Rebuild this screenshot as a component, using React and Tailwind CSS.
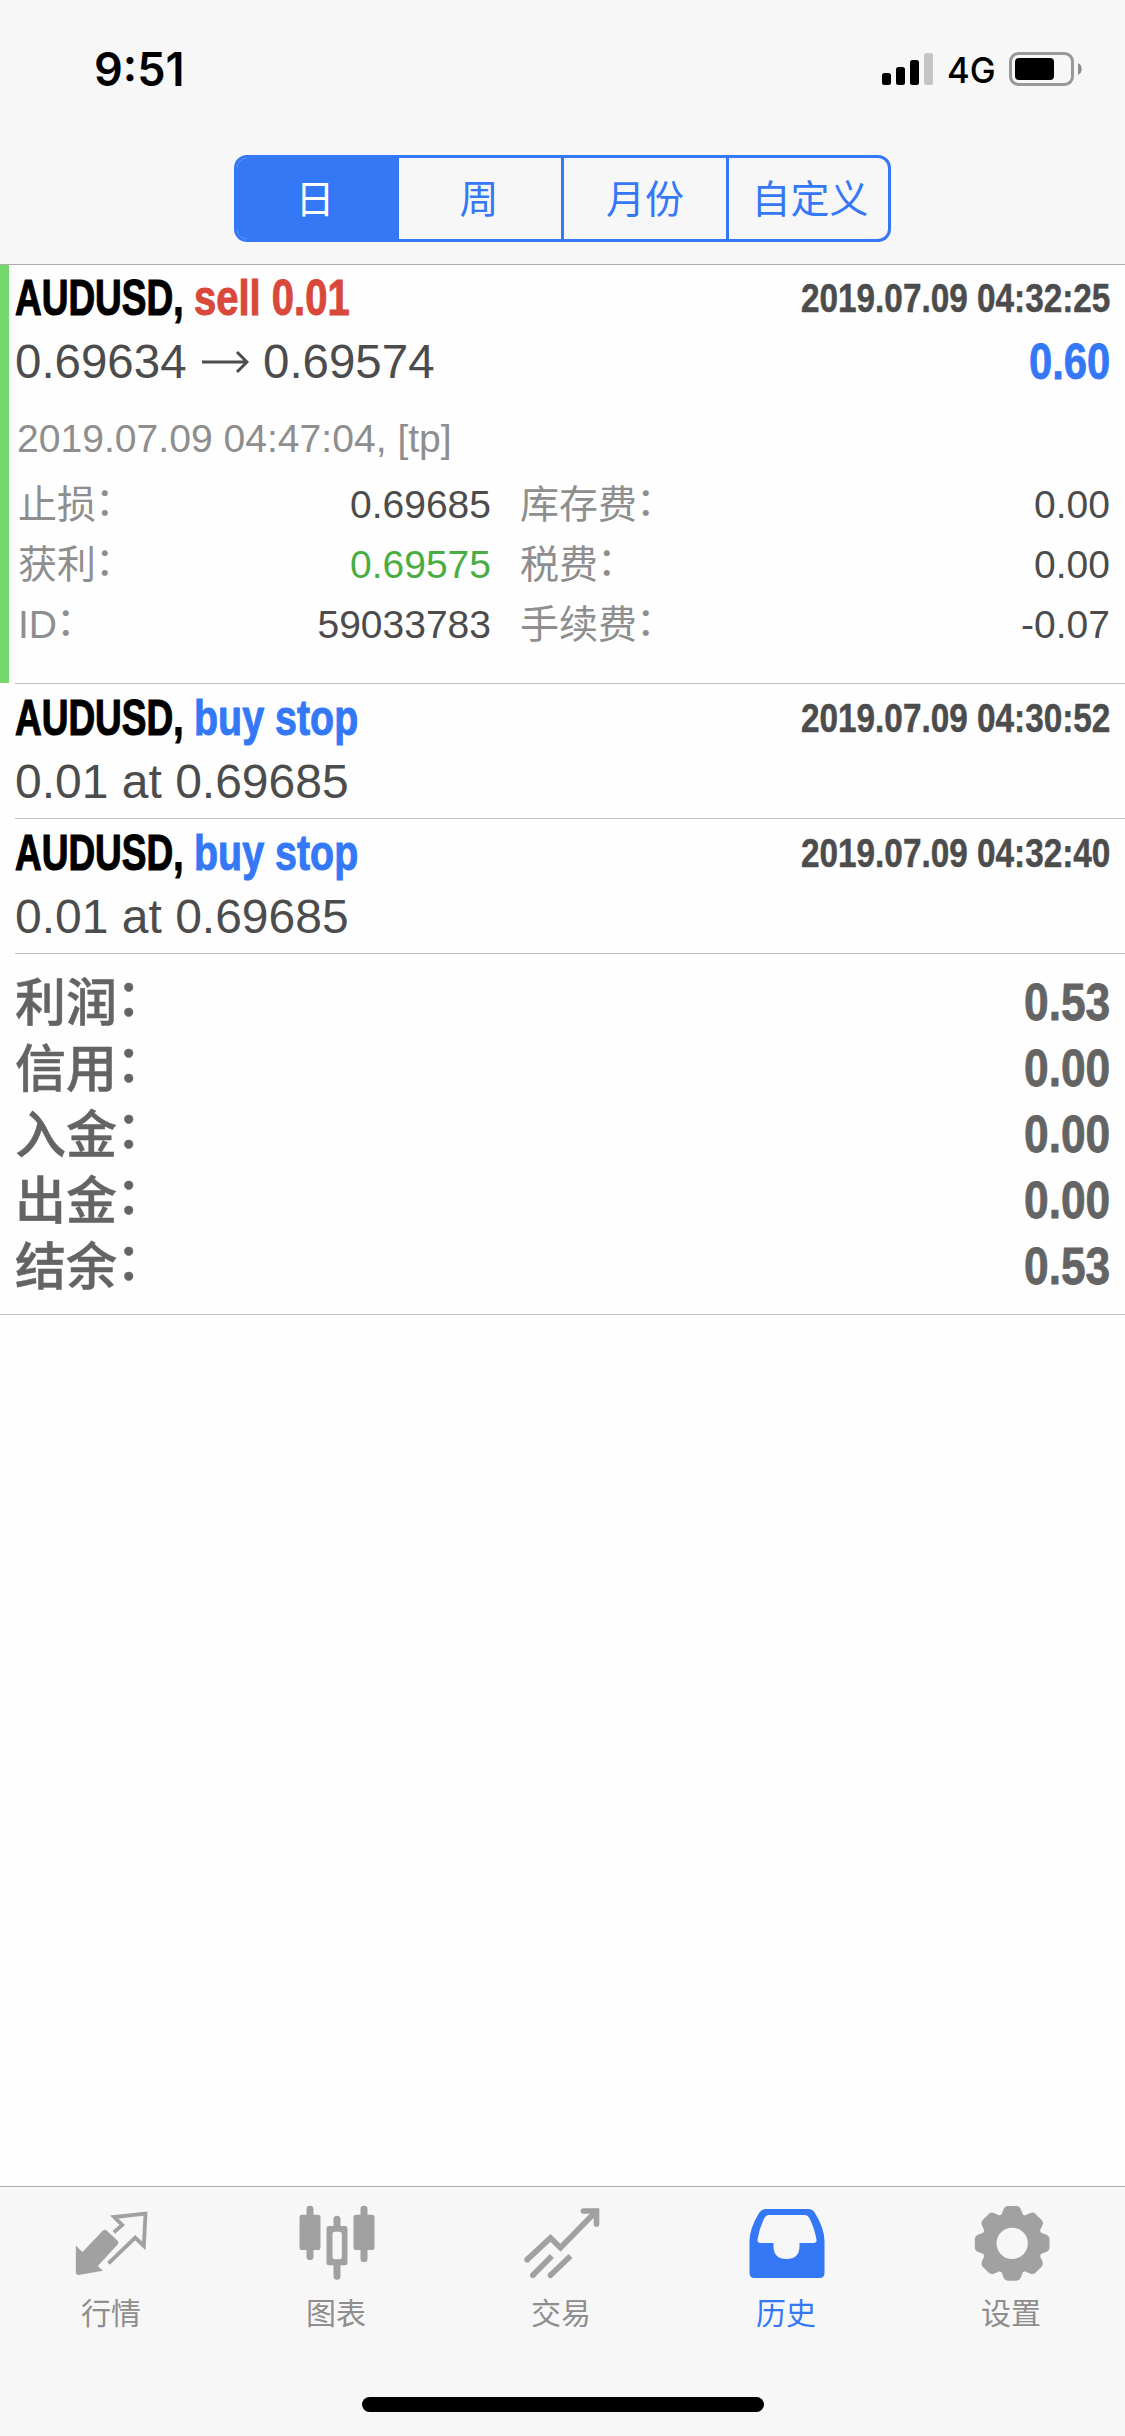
import { useLayoutEffect, useRef, useState } from "react";

// Squeezes a run of text horizontally so that it takes exactly `width` pixels.
function Condensed({ width, className = "", children }) {
  const ref = useRef(null);
  const [scale, setScale] = useState(1);
  useLayoutEffect(() => {
    setScale(width / ref.current.offsetWidth);
  }, [width, children]);
  return (
    <span className={`block ${className}`} style={{ width }}>
      <span
        ref={ref}
        className="inline-block origin-left whitespace-nowrap"
        style={{ transform: `scaleX(${scale})` }}
      >
        {children}
      </span>
    </span>
  );
}

const GRAY = "#a1a1a1";
const BLUE = "#3478f6";

function StatusBar() {
  return (
    <div className="flex h-[138px] items-center pl-[94px] pr-[43px] font-['Inter',sans-serif] text-black">
      <Condensed width={90} className="text-[46px] font-semibold leading-[54px]">9:51</Condensed>
      <svg className="ml-auto mr-[14px] h-8 w-[51px]" viewBox="0 0 51 32">
        <rect x="0" y="20" width="9" height="12" rx="2.5" />
        <rect x="14" y="14" width="9" height="18" rx="2.5" />
        <rect x="28" y="7" width="9" height="25" rx="2.5" />
        <rect x="42" y="0" width="9" height="32" rx="2.5" fill="#c5c5c5" />
      </svg>
      <Condensed width={49} className="relative top-px text-[36px] font-medium leading-[44px]">4G</Condensed>
      <svg className="ml-[13px] h-[34px] w-[73px]" viewBox="0 0 73 34">
        <rect x="1.5" y="1.5" width="62" height="31" rx="8" fill="none" stroke="#999" strokeWidth="3" />
        <rect x="6" y="6" width="39" height="22" rx="4" />
        <path d="M69 11c5 2.5 5 9.500 0 12z" fill="#8c8c8c" />
      </svg>
    </div>
  );
}

function Segments() {
  return (
    <div className="ml-[234px] mt-[17px] flex h-[87px] w-[657px] overflow-hidden rounded-[13px] border-[3px] border-[#3478f6] text-[39px] leading-[83px] text-[#3478f6]">
      <div className="w-[162px] bg-[#3478f6] pr-1.5 text-center text-white">日</div>
      <div className="w-[162px] pr-0.5 text-center">周</div>
      <div className="w-[165px] border-l-[3px] border-[#3478f6] text-center">月份</div>
      <div className="w-[162px] border-l-[3px] border-[#3478f6] pl-[3px] text-center">自定义</div>
    </div>
  );
}

function DealTop({ action, actionWidth, color, date }) {
  return (
    <div className="flex h-[67px] items-start pl-[15px] pr-[15px] font-bold">
      <Condensed width={179} className="text-[50px] leading-[67px] text-black [-webkit-text-stroke:1.2px]">AUDUSD,&nbsp;</Condensed>
      <Condensed width={actionWidth} className={`text-[50px] leading-[67px] [-webkit-text-stroke:1px] ${color}`}>{action}</Condensed>
      <Condensed width={309} className="ml-auto text-[40px] leading-[66px] text-[#4c4c4c] [-webkit-text-stroke:0.5px]">{date}</Condensed>
    </div>
  );
}

function Detail({ label, value, color = "text-[#4c4c4c]" }) {
  return (
    <div className="flex h-[60px] justify-between leading-[60px]">
      <span className="whitespace-nowrap text-[#8e8e8e]">
        {label}
        <span className="relative right-px bottom-[3px]">：</span>
      </span>
      <span className={color}>{value}</span>
    </div>
  );
}

function ClosedDeal() {
  return (
    <section className="flex h-[418px]">
      <div className="w-[9px] bg-[#75d86e]" />
      <div className="-ml-[9px] flex-1">
        <DealTop action="sell 0.01" actionWidth={156} color="text-[#d8483b]" date="2019.07.09 04:32:25" />
        <div className="flex h-[60px] items-center pl-[15px] pr-[15px] text-[48px] leading-[60px] text-[#4c4c4c]">
          <Condensed width={172}>0.69634</Condensed>
          <svg className="ml-[14px] mr-[14px] h-[24px] w-[48px]" viewBox="0 0 48 24" fill="none" stroke="#4c4c4c" strokeWidth="3">
            <path d="M1 12H46M36 2L46 12L36 22" />
          </svg>
          <Condensed width={172}>0.69574</Condensed>
          <Condensed width={81} className="ml-auto text-[50px] font-bold text-[#3478f6] [-webkit-text-stroke:0.8px]">0.60</Condensed>
        </div>
        <div className="mt-[17px] h-[60px] pl-[17px] text-[39px] leading-[59px] text-[#8e8e8e]">
          <Condensed width={435}>2019.07.09 04:47:04, [tp]</Condensed>
        </div>
        <div className="mt-[6px] grid grid-cols-[473px_590px] gap-x-[29px] pl-[18px] text-[39px]">
          <Detail label="止损" value="0.69685" />
          <Detail label="库存费" value="0.00" />
          <Detail label="获利" value="0.69575" color="text-[#49ad44]" />
          <Detail label="税费" value="0.00" />
          <Detail label="ID" value="59033783" />
          <Detail label="手续费" value="-0.07" />
        </div>
      </div>
    </section>
  );
}

function PendingOrder({ date }) {
  return (
    <section className="h-[135px]">
      <div className="mb-px ml-[15px] h-px bg-[#c0c0c0]" />
      <DealTop action="buy stop" actionWidth={164} color="text-[#3478f6]" date={date} />
      <div className="h-[60px] pl-[15px] text-[48px] leading-[60px] text-[#4c4c4c]">
        <Condensed width={334}>0.01 at 0.69685</Condensed>
      </div>
    </section>
  );
}

const totals = [
  ["利润", "0.53"],
  ["信用", "0.00"],
  ["入金", "0.00"],
  ["出金", "0.00"],
  ["结余", "0.53"],
];

function Totals() {
  return (
    <section className="h-[362px] border-b border-[#c0c0c0]">
      <div className="ml-[15px] h-px bg-[#c0c0c0]" />
      <div className="px-[15px] pt-[16px] text-[51px] leading-[66px] text-[#646464]">
        {totals.map(([label, value]) => (
          <div key={label} className="flex h-[66px] justify-between">
            <span className="pt-px font-medium [-webkit-text-stroke:0.5px]">
              {label}
              <span className="relative right-px bottom-[5px]">：</span>
            </span>
            <Condensed width={86} className="font-bold [-webkit-text-stroke:0.8px]">{value}</Condensed>
          </div>
        ))}
      </div>
    </section>
  );
}

function QuotesIcon() {
  return (
    <svg className="size-20" viewBox="217.5 99 240 240">
      <path d="M306 183Q313 176 320 183L350 211Q357 218 350 225L292 288L307 302L235 315Q226 315 226 307V227L246 246Z" fill={GRAY} />
      <path d="M340 187L365 165L341 141L435 131L430 228L404 203L324 280" fill="none" stroke={GRAY} strokeWidth="11.500" />
    </svg>
  );
}

function ChartIcon() {
  return (
    <svg className="size-20" viewBox="892.5 99 240 240" fill={GRAY}>
      <rect x="897" y="134" width="63" height="106" rx="7" />
      <rect x="918" y="107" width="21" height="163" rx="10" />
      <rect x="1059" y="134" width="63" height="106" rx="7" />
      <rect x="1080" y="107" width="21" height="169" rx="10" />
      <path d="M999 148a10.500 10.500 0 0 1 21 0v20h14q7 0 7 7v104q0 7-7 7h-14v33a10.500 10.500 0 0 1-21 0v-33h-14q-7 0-7-7V175q0-7 7-7h14zM1003 185q-7 0-7 7v69q0 7 7 7h14q7 0 7-7v-69q0-7-7-7z" fillRule="evenodd" />
    </svg>
  );
}

function TradeIcon() {
  return (
    <svg className="size-20" viewBox="307.5 99 240 240" fill="none" stroke={GRAY} strokeWidth="17">
      <path d="M320 269L390 204L420 233L527 124" />
      <path d="M489 123H528V162" strokeLinecap="round" />
      <path d="M337 316L394 258M390 316L450 258" />
      <g fill={GRAY} stroke="none">
        <circle cx="320" cy="269" r="8.500" />
        <circle cx="337" cy="316" r="8.500" />
        <circle cx="390" cy="316" r="8.500" />
      </g>
    </svg>
  );
}

function HistoryIcon() {
  return (
    <svg className="size-20" viewBox="982.5 99 240 240">
      <path
        d="M1036 117H1163Q1176 117 1183 128Q1212 175 1212 214V309Q1212 324 1197 324H1002Q987 324 987 309V214Q987 175 1016 128Q1023 117 1036 117ZM1045 135Q1036 135 1032 143Q1016 176 1011 208Q1010 219 1019 219H1059V228Q1059 267 1098 267Q1137 267 1137 228V219H1180Q1189 219 1188 209Q1182 174 1166 143Q1162 135 1153 135Z"
        fill={BLUE}
        fillRule="evenodd"
      />
    </svg>
  );
}

function SettingsIcon() {
  return (
    <svg className="size-20" viewBox="397.5 99 240 240" fill="none" stroke={GRAY}>
      <circle cx="515" cy="220" r="69.500" strokeWidth="45" />
      {[0, 45, 90, 135, 180, 225, 270, 315].map((a) => (
        <path
          key={a}
          d="M501 114H529Q533 115 535 119L545 145H485L495 119Q497 115 501 114Z"
          transform={`rotate(${a} 515 220)`}
          fill={GRAY}
          strokeWidth="12"
          strokeLinejoin="round"
        />
      ))}
    </svg>
  );
}

const tabs = [
  { label: "行情", Icon: QuotesIcon },
  { label: "图表", Icon: ChartIcon },
  { label: "交易", Icon: TradeIcon },
  { label: "历史", Icon: HistoryIcon, active: true },
  { label: "设置", Icon: SettingsIcon },
];

function TabBar() {
  return (
    <footer className="flex h-[250px] flex-col items-center border-t border-[#acacac] bg-[#f7f7f7]">
      <nav className="grid w-full grid-cols-5 pt-4">
        {tabs.map(({ label, Icon, active }) => (
          <div key={label} className="flex flex-col items-center">
            <Icon />
            <span className={`mt-[11px] pr-[3px] text-[30px] leading-10 ${active ? "text-[#3478f6]" : "text-[#8e8e8e]"}`}>
              {label}
            </span>
          </div>
        ))}
      </nav>
      <div className="mb-6 mt-auto h-[15px] w-[402px] rounded-full bg-black" />
    </footer>
  );
}

export default function App() {
  return (
    <div className="flex h-[2436px] w-[1125px] flex-col overflow-hidden bg-[#fefefe] font-['Liberation_Sans','Noto_Sans_CJK_SC',sans-serif]">
      <header className="h-[265px] border-b border-[#acacac] bg-[#f7f7f7]">
        <StatusBar />
        <Segments />
      </header>
      <main className="flex-1">
        <ClosedDeal />
        <PendingOrder date="2019.07.09 04:30:52" />
        <PendingOrder date="2019.07.09 04:32:40" />
        <Totals />
      </main>
      <TabBar />
    </div>
  );
}
